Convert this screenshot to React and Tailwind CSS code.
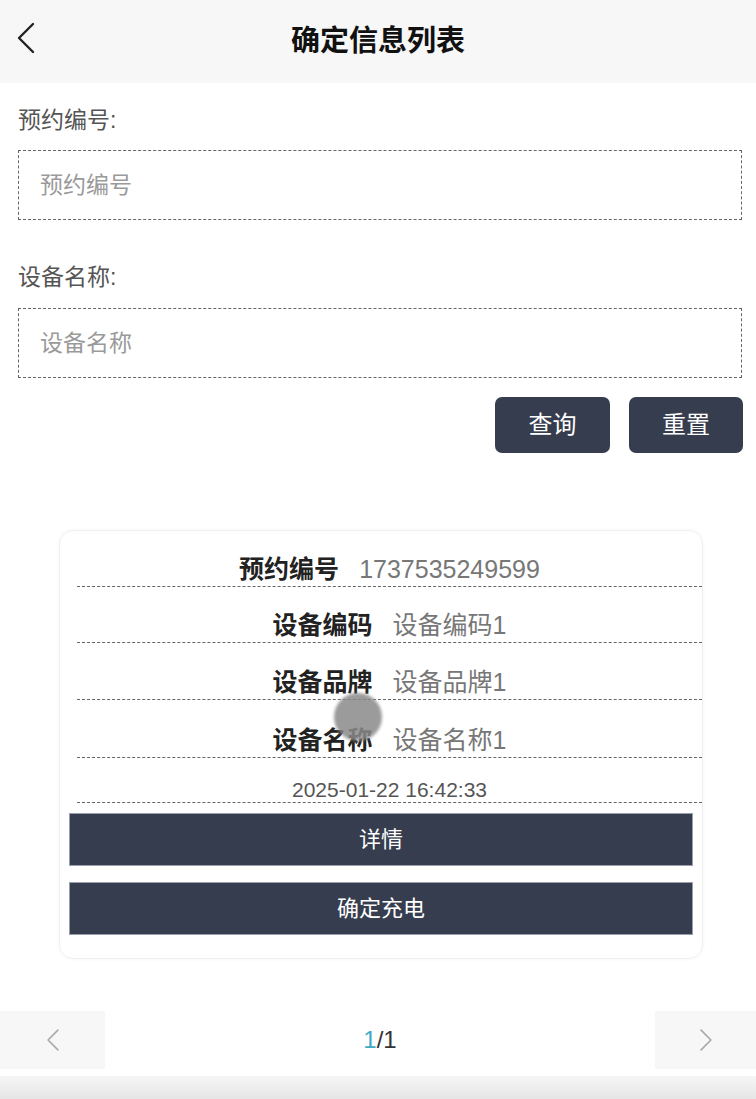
const cjk = { fontFamily: '"Liberation Sans", "Noto Sans CJK SC", sans-serif' }

const rows = [
  { label: '预约编号', value: '1737535249599', h: 'h-[56px]' },
  { label: '设备编码', value: '设备编码1', h: 'h-[56px]' },
  { label: '设备品牌', value: '设备品牌1', h: 'h-[57px]' },
  { label: '设备名称', value: '设备名称1', h: 'h-[58px]' },
]

function Chevron({ dir = 'left', className = '' }) {
  return (
    <svg viewBox="0 0 20 32" className={className} fill="none">
      <path
        d={dir === 'left' ? 'M17 2 L3 16 L17 30' : 'M3 2 L17 16 L3 30'}
        stroke="currentColor"
        strokeWidth="2.4"
        strokeLinecap="round"
        strokeLinejoin="round"
      />
    </svg>
  )
}

export default function App() {
  return (
    <div className="w-[756px] h-[1099px] bg-white flex flex-col overflow-hidden" style={cjk}>
      {/* header */}
      <div className="h-[83px] bg-[#f7f7f7] flex items-center relative shrink-0">
        <Chevron className="absolute left-[15px] top-[22px] w-[22px] h-[32px] text-[#222]" />
        <div className="flex-1 text-center text-[29px] font-bold text-[#111] leading-none">确定信息列表</div>
      </div>

      {/* search form */}
      <div className="pl-[18px] pr-[14px] flex flex-col">
        <div className="mt-[22px] text-[23px] leading-[30px] text-[#555]">预约编号:</div>
        <div className="mt-[15px] h-[70px] border border-dashed border-[#666] flex items-center px-[21px] text-[23px] text-[#9a9a9a]">
          预约编号
        </div>
        <div className="mt-[42px] text-[23px] leading-[30px] text-[#555]">设备名称:</div>
        <div className="mt-[16px] h-[70px] border border-dashed border-[#666] flex items-center px-[21px] text-[23px] text-[#9a9a9a]">
          设备名称
        </div>
        <div className="mt-[19px] flex justify-end gap-[19px] -mr-[1px]">
          <button className="w-[115px] h-[56px] rounded-[7px] bg-[#363d4e] text-white text-[24px]">查询</button>
          <button className="w-[114px] h-[56px] rounded-[7px] bg-[#363d4e] text-white text-[24px]">重置</button>
        </div>
      </div>

      {/* card */}
      <div className="mt-[77px] ml-[59px] w-[644px] rounded-[14px] border border-[#f0f0f0] shadow-[0_0_4px_rgba(0,0,0,0.04)] pb-[23px] relative">
        <div className="pl-[17px]">
          {rows.map((r) => (
            <div
              key={r.label}
              className={`${r.h} border-b border-dashed border-[#666] flex items-end justify-center pb-[4px] text-[25px] leading-[26px]`}
            >
              <span className="font-bold text-[#222]">{r.label}</span>
              <span className="ml-[20px] text-[#777]">{r.value}</span>
            </div>
          ))}
          <div className="h-[45px] border-b border-dashed border-[#666] flex items-end justify-center pb-[1px] text-[21px] leading-[22px] text-[#555]">
            2025-01-22 16:42:33
          </div>
        </div>
        <div className="mt-[10px] mx-[9px] flex flex-col gap-[16px]">
          <button className="h-[53px] bg-[#363d4e] border border-[#9aa0ab] text-white text-[22px]">详情</button>
          <button className="h-[53px] bg-[#363d4e] border border-[#9aa0ab] text-white text-[22px]">确定充电</button>
        </div>
        {/* touch indicator */}
        <div className="absolute left-[274px] top-[162px] w-[48px] h-[48px] rounded-full bg-[#8a8a8a] opacity-85 blur-[1.5px]" />
      </div>

      {/* pagination */}
      <div className="mt-[52px] h-[58px] flex items-center shrink-0">
        <div className="w-[105px] h-full bg-[#f7f7f7] flex items-center justify-center">
          <Chevron className="w-[14px] h-[26px] text-[#aaa]" />
        </div>
        <div className="flex-1 text-center text-[24px] text-[#333]">
          <span className="text-[#3fa9c6]">1</span>/1
        </div>
        <div className="w-[101px] h-full bg-[#f7f7f7] flex items-center justify-center">
          <Chevron dir="right" className="w-[14px] h-[26px] text-[#aaa]" />
        </div>
      </div>

      <div className="mt-[7px] flex-1 bg-gradient-to-b from-[#f6f6f6] to-[#e6e6e6]" />
    </div>
  )
}
